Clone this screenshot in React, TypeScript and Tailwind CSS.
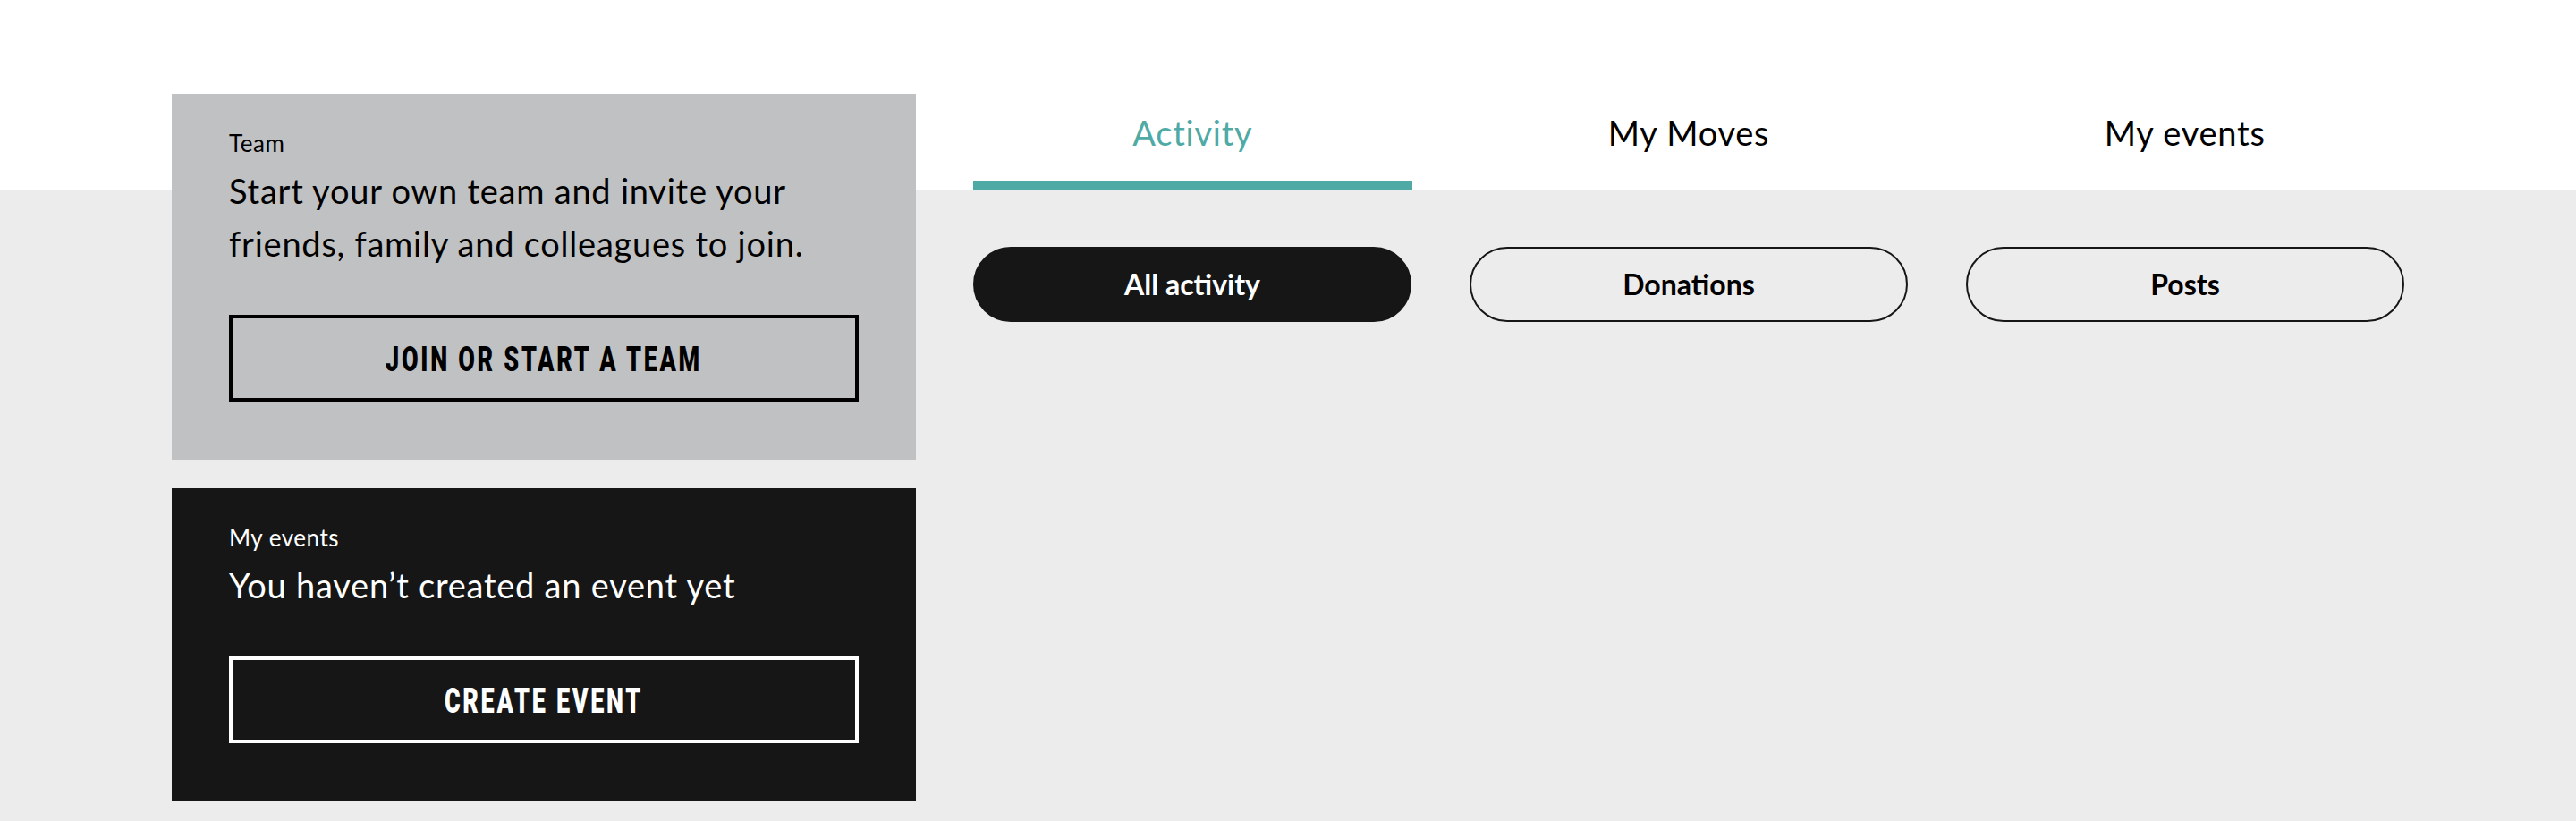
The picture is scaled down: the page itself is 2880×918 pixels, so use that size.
import React from "react";

const tabs = ["Activity", "My Moves", "My events"];
const filters = ["All activity", "Donations", "Posts"];

function InfoCard(props: { dark?: boolean; label: string; text: string; action: string }) {
  const dark = props.dark;
  return (
    <div className={dark ? "bg-[#161616] text-white px-[64px] pt-[40px] pb-[65px]" : "bg-[#c0c1c3] text-black px-[64px] pt-[40px] pb-[65px]"}>
      <p className="text-[26px] leading-[30px] tracking-[0.02em]">{props.label}</p>
      <h2 className="mt-[9px] text-[38px] leading-[59px] font-normal tracking-[0.02em]">{props.text}</h2>
      <button
        className={
          dark
            ? "mt-[50px] h-[97px] w-full border-[4px] border-white flex items-center justify-center"
            : "mt-[50px] h-[97px] w-full border-[4px] border-black flex items-center justify-center"
        }
      >
        <span className="inline-block translate-y-[2px] font-['Roboto',sans-serif] font-black uppercase text-[27px] tracking-[0.1em] scale-y-[1.45]">
          {props.action}
        </span>
      </button>
    </div>
  );
}

export default function App() {
  return (
    <div className="min-h-[918px] bg-[linear-gradient(to_bottom,#ffffff_212px,#ececec_212px)] font-['Lato',sans-serif] text-[#111]">
      <div className="mx-auto w-[2496px] pt-[105px] flex items-start gap-[64px]">
        {/* left column */}
        <div className="w-[832px] flex flex-col gap-[32px]">
          <InfoCard
            label="Team"
            text="Start your own team and invite your friends, family and colleagues to join."
            action="Join or start a team"
          />
          <InfoCard dark label="My events" text="You haven’t created an event yet" action="Create event" />
        </div>

        {/* right column */}
        <div className="w-[1600px]">
          <div className="grid grid-cols-3 gap-[64px]">
            {tabs.map((t, i) => (
              <div key={t} className="h-[107px] flex flex-col justify-between">
                <span
                  className={
                    i === 0
                      ? "pt-[20px] text-center text-[38px] leading-[46px] tracking-[0.02em] text-[#4faaa6]"
                      : "pt-[20px] text-center text-[38px] leading-[46px] tracking-[0.02em] text-black"
                  }
                >
                  {t}
                </span>
                <div className={i === 0 ? "h-[10px] bg-[#4faaa6]" : "h-[10px]"} />
              </div>
            ))}
          </div>
          <div className="mt-[64px] grid grid-cols-3 gap-[65px]">
            {filters.map((f, i) => (
              <button
                key={f}
                className={
                  i === 0
                    ? "h-[84px] rounded-full bg-[#161616] border-2 border-[#161616] text-white text-[32px] font-bold"
                    : "h-[84px] rounded-full border-2 border-[#161616] text-black text-[32px] font-bold"
                }
              >
                {f}
              </button>
            ))}
          </div>
        </div>
      </div>
    </div>
  );
}
